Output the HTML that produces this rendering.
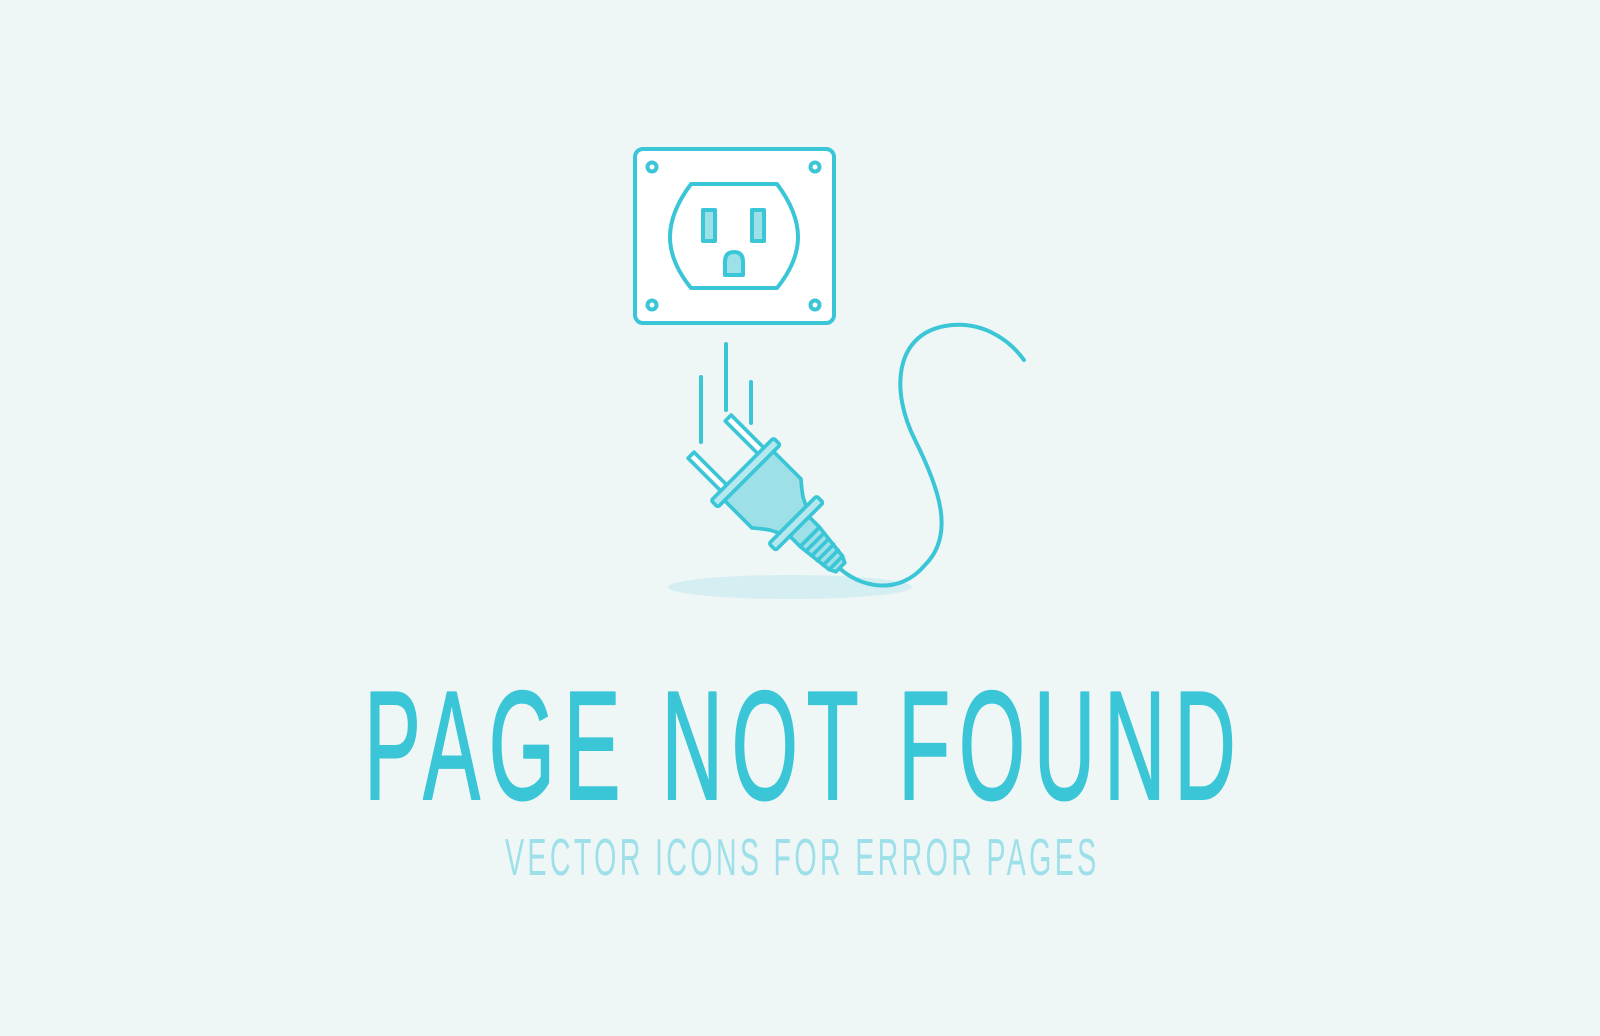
<!DOCTYPE html>
<html><head><meta charset="utf-8"><style>
html,body{margin:0;padding:0;background:#eff6f6;}
svg{display:block}
</style></head><body>
<svg width="1600" height="1036" viewBox="0 0 1600 1036" xmlns="http://www.w3.org/2000/svg">
<rect width="1600" height="1036" fill="#eff6f6"/>
<ellipse cx="790" cy="587" rx="122" ry="12" fill="#d5eef1"/>
<g fill="none" stroke="#3ac6d6" stroke-width="4" stroke-linecap="round" stroke-linejoin="round">
  <rect x="635" y="149" width="199" height="174" rx="8" fill="#fff"/>
  <circle cx="652" cy="167" r="4.5"/><circle cx="815" cy="167" r="4.5"/>
  <circle cx="652" cy="305" r="4.5"/><circle cx="815" cy="305" r="4.5"/>
  <path d="M691,184 L777,184 Q798,212 798,237 Q798,262 777,288 L691,288 Q670,262 670,237 Q670,212 691,184 Z" fill="#fff"/>
  <rect x="703" y="210" width="12" height="31" fill="#9de0e8"/>
  <rect x="752" y="210" width="12" height="31" fill="#9de0e8"/>
  <path d="M725,275 L725,262 Q725,252 734,252 Q743,252 743,262 L743,275 Z" fill="#9de0e8"/>
  <line x1="701" y1="377" x2="701" y2="442"/>
  <line x1="726" y1="344" x2="726" y2="410"/>
  <line x1="751" y1="382" x2="751" y2="423"/>
  <path d="M835,564 C860,590 900,595 925,565 C955,535 940,490 915,440 C890,390 895,335 945,326 C980,320 1008,338 1024,360"/>
  <g transform="translate(772,499) rotate(45) scale(1.05)" stroke-width="3.5">
    <rect x="-84" y="-29" width="48" height="8" fill="#fff"/>
    <rect x="-84" y="21" width="48" height="8" fill="#fff"/>
    <path d="M-32,-33 L6,-33 Q14,-26 20,-22 Q26,-19 28,-18 L28,18 Q26,19 20,22 Q14,26 6,33 L-32,33 Z" fill="#9de0e8"/>
    <rect x="-40" y="-42" width="9" height="84" rx="2" fill="#b5e8ee"/>
    <rect x="28" y="-32" width="9" height="64" rx="2" fill="#b5e8ee"/>
    <rect x="37" y="-13" width="14" height="26" fill="#9de0e8"/>
    <path d="M51,-13 L86,-9 L92,-6 L92,6 L86,9 L51,13 Z" fill="#9de0e8"/>
    <line x1="58" y1="-12" x2="58" y2="12"/>
    <line x1="65" y1="-11" x2="65" y2="11"/>
    <line x1="72" y1="-11" x2="72" y2="11"/>
    <line x1="79" y1="-10" x2="79" y2="10"/>
    <line x1="86" y1="-9" x2="86" y2="9"/>
  </g>
</g>
<g transform="translate(364,799) scale(0.55,1)">
<text x="0" y="0" font-family="Liberation Sans, sans-serif" font-size="155" fill="#3ac6d6" stroke="#3ac6d6" stroke-width="2" stroke-linejoin="round" textLength="1585" lengthAdjust="spacing">PAGE NOT FOUND</text>
</g>
<g transform="translate(505,875) scale(0.55,1)">
<text x="0" y="0" font-family="Liberation Sans, sans-serif" font-size="52" fill="#9ee0e9" textLength="1075" lengthAdjust="spacing">VECTOR ICONS FOR ERROR PAGES</text>
</g>
</svg>
</body></html>
